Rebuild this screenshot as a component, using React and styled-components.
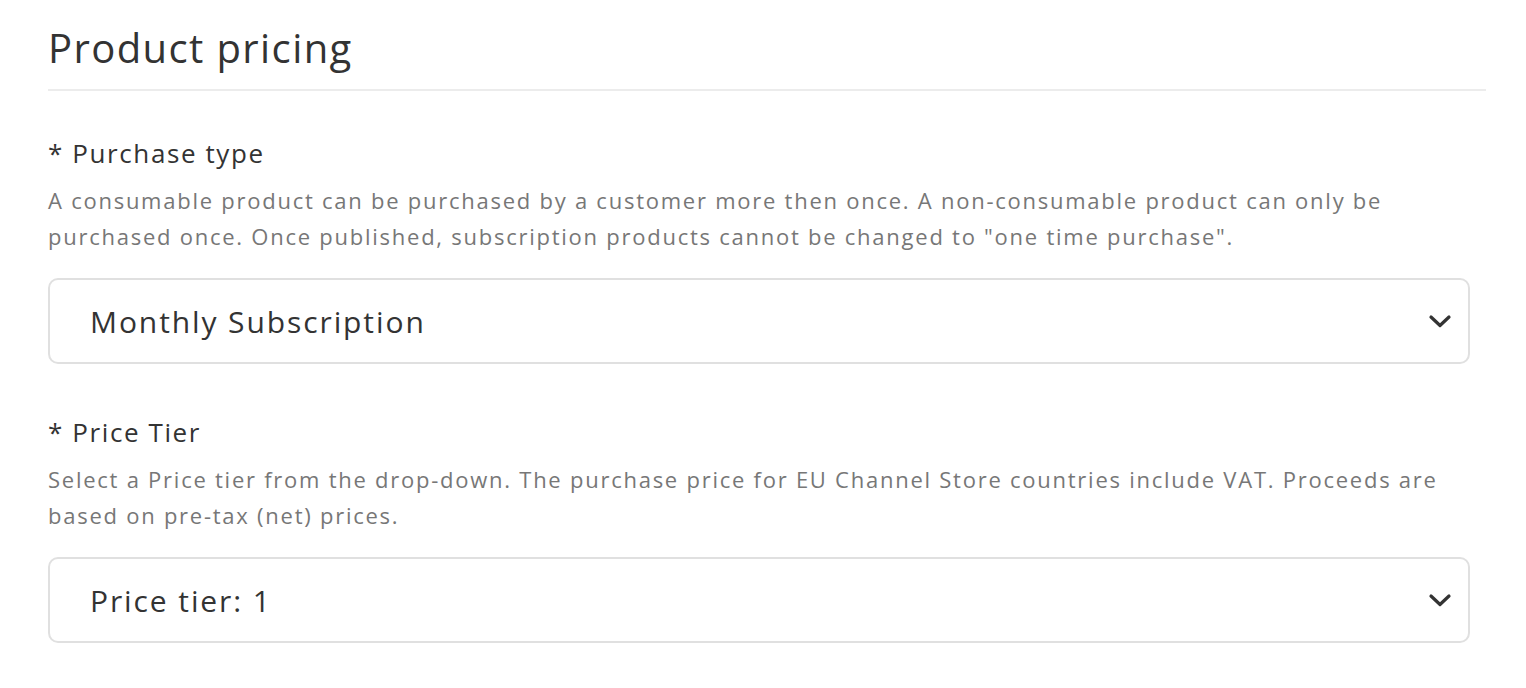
import React from "react";
import styled, { createGlobalStyle } from "styled-components";

const Global = createGlobalStyle`
  html, body { margin: 0; padding: 0; background: #fff; }
  body { font-family: "Open Sans", "Liberation Sans", sans-serif; color: #333; }
`;

const Page = styled.div`
  padding: 24px 40px 0 48px;
  width: 1438px;
`;

const Title = styled.h1`
  margin: 0;
  font-size: 40px;
  font-weight: 400;
  color: #333;
  line-height: 48px;
  letter-spacing: 1.4px;
  padding-bottom: 17px;
  border-bottom: 2px solid #ececec;
`;

const Field = styled.section`
  margin-top: ${p => p.$first ? "44px" : "50px"};
  display: flex;
  flex-direction: column;
  width: 1422px;
`;

const Label = styled.div`
  font-size: 26px;
  line-height: 36px;
  color: #333;
  letter-spacing: 1.6px;
`;

const Help = styled.p`
  margin: 11px 0 0;
  font-size: 22px;
  line-height: 36px;
  color: #777;
  letter-spacing: 1.75px;
`;

const Select = styled.div`
  margin-top: 24px;
  height: 86px;
  box-sizing: border-box;
  border: 2px solid #e0e0e0;
  border-radius: 10px;
  display: flex;
  align-items: center;
  justify-content: space-between;
  padding: 0 16px 0 40px;
`;

const Value = styled.span`
  font-size: 30px;
  color: #333;
  letter-spacing: 1.9px;
`;

const Chevron = () => (
  <svg width="24" height="14" viewBox="0 0 24 14" fill="none">
    <path d="M3 3 L12 11.5 L21 3" stroke="#333" strokeWidth="3.2" strokeLinecap="round" strokeLinejoin="round" />
  </svg>
);

export default function App() {
  return (
    <Page>
      <Global />
      <Title>Product pricing</Title>
      <Field $first>
        <Label>* Purchase type</Label>
        <Help>
          A consumable product can be purchased by a customer more then once. A non-consumable product can only be purchased once. Once published, subscription products cannot be changed to "one time purchase".
        </Help>
        <Select>
          <Value>Monthly Subscription</Value>
          <Chevron />
        </Select>
      </Field>
      <Field>
        <Label>* Price Tier</Label>
        <Help>
          Select a Price tier from the drop-down. The purchase price for EU Channel Store countries include VAT. Proceeds are based on pre-tax (net) prices.
        </Help>
        <Select>
          <Value>Price tier: 1</Value>
          <Chevron />
        </Select>
      </Field>
    </Page>
  );
}
